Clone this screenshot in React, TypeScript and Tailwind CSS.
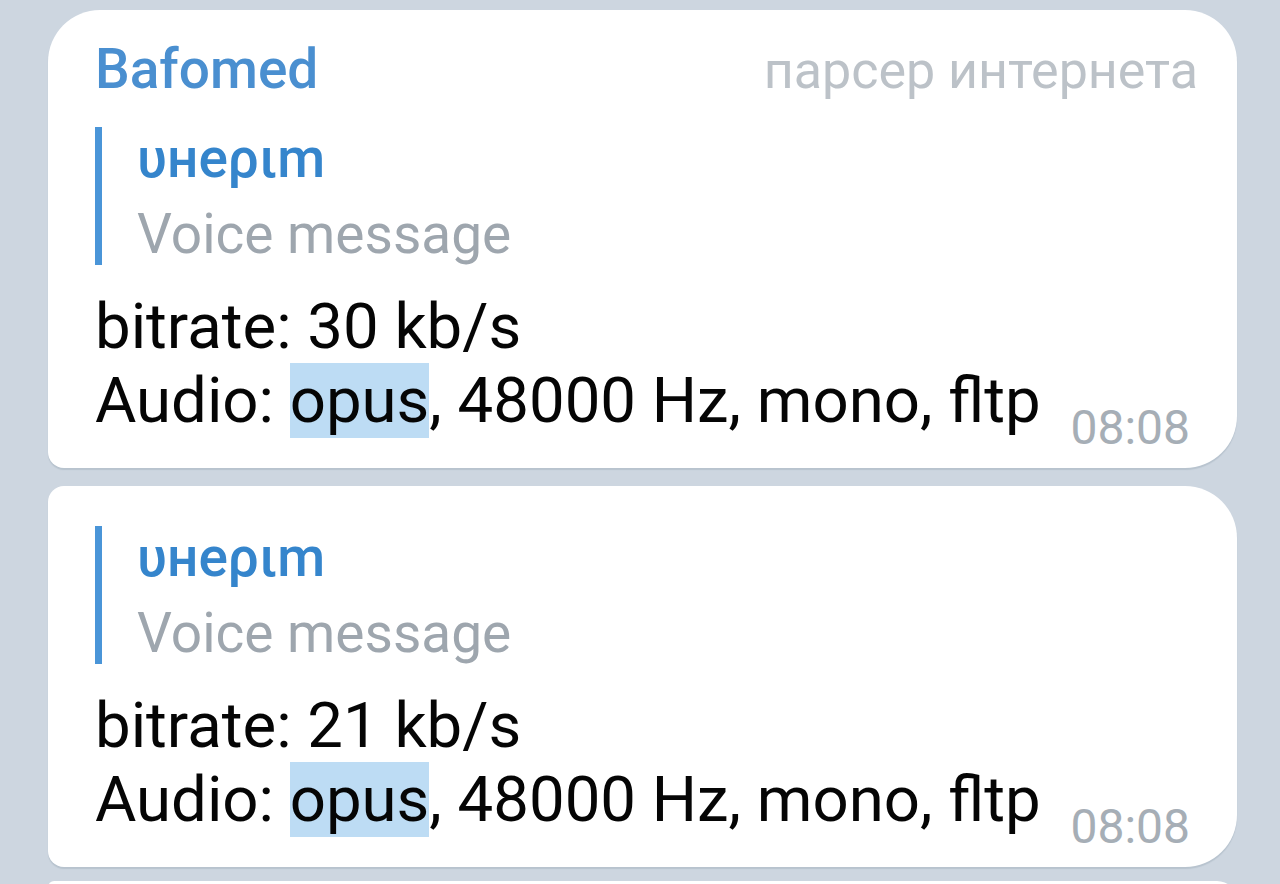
const font = { fontFamily: 'Roboto, "Noto Sans", sans-serif' };

function Reply() {
  return (
    <div className="flex h-[138px]">
      <div className="w-[7px] shrink-0 bg-[#4a95d8]" />
      <div className="ml-[35px] flex flex-col">
        <div className="h-[64px] text-[55px] font-medium leading-[62px] text-[#3585cc]">υнеριm</div>
        <div className="mt-[13px] h-[61px] text-[55px] leading-[61px] text-[#9ea6ae]">Voice message</div>
      </div>
    </div>
  );
}

function Body({ bitrate }: { bitrate: string }) {
  return (
    <div className="mt-[25px] flex items-end justify-between">
      <div className="pb-[18px] text-[63.5px] leading-[74px] text-[#050505]">
        <div>bitrate: {bitrate}</div>
        <div>
          Audio: <span className="bg-[#bddcf4]">opus</span>, 48000 Hz, mono, fltp
        </div>
      </div>
      <div className="text-[48px] leading-[56px] text-[#a6aeb6]">08:08</div>
    </div>
  );
}

export default function App() {
  return (
    <div className="min-h-[884px] overflow-hidden bg-[#cdd6e0] pl-[48px] pr-[43px] pt-[10px]" style={font}>
      <div className="rounded-[52px] rounded-bl-[16px] bg-white pb-[12px] pl-[47px] pr-[47px] pt-[27px] shadow-[0_2px_1px_rgba(90,110,130,0.18)]">
        <div className="-mr-[8px] flex items-baseline justify-between">
          <div className="text-[55px] font-medium leading-[64px] text-[#4a8fd0]">Bafomed</div>
          <div className="text-[52px] leading-[64px] text-[#bcc2c8]">парсер интернета</div>
        </div>
        <div className="mt-[24px]">
          <Reply />
        </div>
        <Body bitrate="30 kb/s" />
      </div>

      <div className="mt-[18px] rounded-[52px] rounded-l-[16px] bg-white pb-[12px] pl-[47px] pr-[47px] pt-[40px] shadow-[0_2px_1px_rgba(90,110,130,0.18)]">
        <Reply />
        <Body bitrate="21 kb/s" />
      </div>

      <div className="mt-[14px] h-[40px] rounded-[52px] rounded-l-[16px] bg-white" />
    </div>
  );
}
